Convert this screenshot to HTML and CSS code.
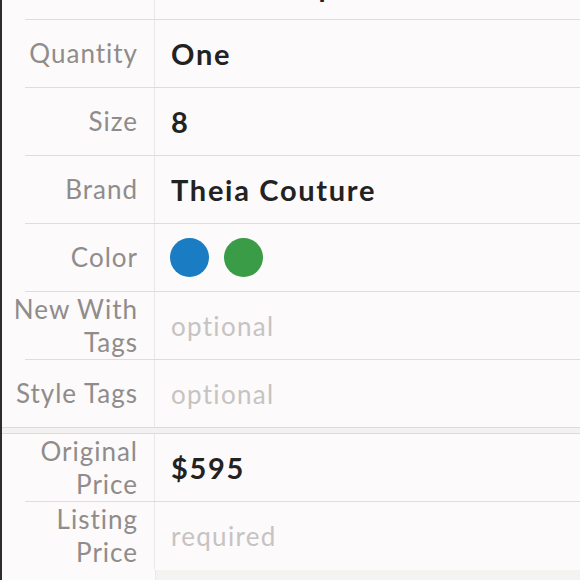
FILE: index.html
```html
<!DOCTYPE html>
<html>
<head>
<meta charset="utf-8">
<link rel="stylesheet" href="styles.css">
</head>
<body>
<div class="screen">
  <div class="section">
    <div class="row">
      <div class="label">Category</div>
      <div class="value">Dress Jumpsuit</div>
    </div>
    <div class="row">
      <div class="label">Quantity</div>
      <div class="value">One</div>
    </div>
    <div class="row">
      <div class="label">Size</div>
      <div class="value">8</div>
    </div>
    <div class="row">
      <div class="label">Brand</div>
      <div class="value">Theia Couture</div>
    </div>
    <div class="row">
      <div class="label">Color</div>
      <div class="value swatches">
        <span class="swatch blue"></span>
        <span class="swatch green"></span>
      </div>
    </div>
    <div class="row">
      <div class="label">New With<br>Tags</div>
      <div class="value placeholder">optional</div>
    </div>
    <div class="row last">
      <div class="label">Style Tags</div>
      <div class="value placeholder">optional</div>
    </div>
  </div>
  <div class="band"></div>
  <div class="section">
    <div class="row">
      <div class="label">Original<br>Price</div>
      <div class="value">$595</div>
    </div>
    <div class="row last">
      <div class="label">Listing<br>Price</div>
      <div class="value placeholder">required</div>
    </div>
  </div>
  <div class="footer">
    <div class="footer-left"></div>
    <div class="footer-right"></div>
  </div>
</div>
</body>
</html>
```

FILE: styles.css
```css
html, body {
  margin: 0;
  padding: 0;
  background: #fcfafa;
  overflow: hidden;
}

.screen {
  width: 580px;
  height: 580px;
  overflow: hidden;
  box-sizing: border-box;
  border-left: 2px solid #2e2d2d;
  background: #fcfafa;
  font-family: Lato, "Open Sans", sans-serif;
}

.section:first-child {
  margin-top: -48px;
}

.row {
  display: flex;
  height: 67px;
  margin-left: 23px;
  border-bottom: 1px solid #dedcdc;
}

.row.last {
  border-bottom: none;
}

.label {
  flex: none;
  width: 153px;
  margin-left: -23px;
  box-sizing: border-box;
  padding-right: 16px;
  border-right: 1px solid #e9e7e7;
  display: flex;
  align-items: center;
  justify-content: flex-end;
  text-align: right;
  font-size: 26px;
  line-height: 33px;
  letter-spacing: 1px;
  color: #8f8c8b;
  white-space: nowrap;
}

.value {
  flex: 1;
  display: flex;
  align-items: center;
  padding-left: 16px;
  font-size: 29px;
  font-weight: 700;
  letter-spacing: 1.7px;
  color: #232222;
  white-space: nowrap;
}

.value.placeholder {
  font-weight: 400;
  font-size: 26px;
  letter-spacing: 1.3px;
  color: #c6c3c2;
}

.swatches {
  gap: 15px;
  padding-left: 15px;
}

.swatch {
  width: 39px;
  height: 39px;
  border-radius: 50%;
}

.swatch.blue {
  background: #1a7cc3;
}

.swatch.green {
  background: #3a9c47;
}

.band {
  height: 5px;
  background: #f3f2f1;
  border-top: 1px solid #dcdada;
  border-bottom: 1px solid #dcdada;
}

.footer {
  display: flex;
  height: 40px;
  border-top: 1px solid #fcfafa;
}

.footer-left {
  flex: none;
  width: 154px;
  border-right: 1px solid #e9e7e7;
  box-sizing: border-box;
}

.footer-right {
  flex: 1;
  background: #f4f3f2;
}
```
